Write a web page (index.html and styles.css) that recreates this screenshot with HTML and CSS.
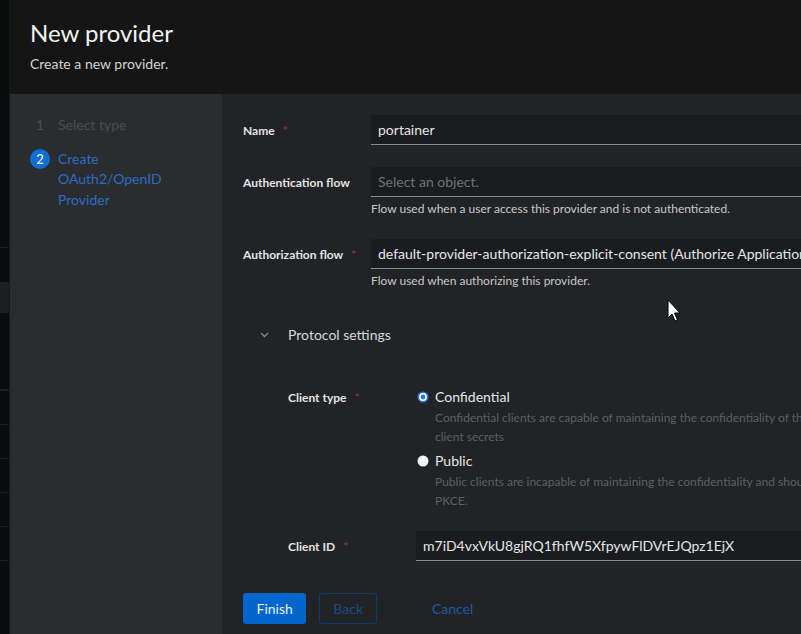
FILE: index.html
```html
<!DOCTYPE html>
<html lang="en">
<head>
<meta charset="utf-8">
<title>New provider</title>
<link rel="stylesheet" href="styles.css">
</head>
<body>
<div class="app">
  <aside class="bg-nav">
    <div class="bg-gap bg-gap-top"></div>
    <div class="bg-row bg-row-a"></div>
    <div class="bg-active"></div>
    <div class="bg-row bg-row-b"></div>
    <div class="bg-row"></div>
    <div class="bg-row"></div>
    <div class="bg-row"></div>
    <div class="bg-row"></div>
    <div class="bg-row"></div>
    <div class="bg-row"></div>
  </aside>
  <div class="modal">
    <header class="modal-header">
      <h1 class="modal-title">New provider</h1>
      <p class="modal-desc">Create a new provider.</p>
    </header>
    <div class="wizard">
      <nav class="steps">
        <ol class="step-list">
          <li class="step step-disabled"><span class="step-num">1</span><span class="step-text">Select type</span></li>
          <li class="step step-current"><span class="step-num"><span class="step-circle">2</span></span><span class="step-text">Create<br>OAuth2/OpenID<br>Provider</span></li>
        </ol>
      </nav>
      <div class="wizard-main">
        <form class="form">
          <div class="form-grid">
            <label class="label">Name <span class="req">*</span></label>
            <div class="control">
              <div class="input">portainer</div>
            </div>

            <label class="label">Authentication flow</label>
            <div class="control">
              <div class="input placeholder">Select an object.</div>
              <div class="helper">Flow used when a user access this provider and is not authenticated.</div>
            </div>

            <label class="label">Authorization flow <span class="req">*</span></label>
            <div class="control">
              <div class="input">default-provider-authorization-explicit-consent (Authorize Application)</div>
              <div class="helper">Flow used when authorizing this provider.</div>
            </div>
          </div>

          <section class="expandable">
            <div class="toggle">
              <svg class="chevron" width="9" height="6" viewBox="0 0 9 6"><path d="M1 1 L4.5 4.5 L8 1" fill="none" stroke="#7f8287" stroke-width="1.4"/></svg>
              <span class="toggle-text">Protocol settings</span>
            </div>
            <div class="form-grid inner-grid">
              <label class="label label-radio">Client type <span class="req">*</span></label>
              <div class="control">
                <div class="radio">
                  <svg class="radio-icon" width="12" height="12" viewBox="0 0 12 12"><circle cx="6" cy="6" r="5.5" fill="#2a79dd"/><circle cx="6" cy="6" r="3.9" fill="#ffffff"/><circle cx="6" cy="6" r="2.4" fill="#2a79dd"/></svg>
                  <span class="radio-label">Confidential</span>
                </div>
                <div class="radio-desc">Confidential clients are capable of maintaining the confidentiality of their credentials such as<br>client secrets</div>
                <div class="radio radio-second">
                  <svg class="radio-icon" width="12" height="12" viewBox="0 0 12 12"><circle cx="6" cy="6" r="5.5" fill="#f4f4f4"/></svg>
                  <span class="radio-label">Public</span>
                </div>
                <div class="radio-desc">Public clients are incapable of maintaining the confidentiality and should use methods like<br>PKCE.</div>
              </div>

              <label class="label">Client ID <span class="req">*</span></label>
              <div class="control">
                <div class="input">m7iD4vxVkU8gjRQ1fhfW5XfpywFlDVrEJQpz1EjX</div>
              </div>
            </div>
          </section>
        </form>
        <footer class="wizard-footer">
          <button class="btn btn-primary" type="button">Finish</button>
          <button class="btn btn-secondary" type="button">Back</button>
          <button class="btn btn-link" type="button">Cancel</button>
        </footer>
      </div>
    </div>
  </div>
</div>
<svg class="cursor" width="14" height="24" viewBox="0 0 14 24"><path d="M1 1 L1 19 L5 15 L8 22 L10.5 21 L7.5 14 L13 14 Z" fill="#ffffff" stroke="#000000" stroke-width="1"/></svg>
</body>
</html>
```
FILE: styles.css
```css
* { box-sizing: border-box; }
html, body { margin: 0; padding: 0; }
body {
  width: 801px;
  height: 634px;
  overflow: hidden;
  background: #0b0d0d;
  font-family: Lato, "Liberation Sans", sans-serif;
  color: #e0e0e0;
  position: relative;
}
.app {
  display: flex;
  height: 634px;
}
.bg-nav {
  width: 10px;
  flex: none;
  display: flex;
  flex-direction: column;
  background: #0a0c0c;
  border-right: 1px solid #17191a;
}
.bg-gap-top { height: 247px; flex: none; }
.bg-row { height: 34px; flex: none; border-top: 1px solid #1b1d1e; }
.bg-row-a { height: 35px; }
.bg-active { height: 31px; flex: none; background: #1c1e1f; }
.bg-row-b { height: 77px; border-top: none; border-bottom: 1px solid #1b1d1e; }

.modal {
  flex: 1;
  display: flex;
  flex-direction: column;
  min-width: 0;
}
.modal-header {
  height: 94px;
  flex: none;
  background: #151515;
  padding: 17px 20px 0;
}
.modal-title {
  margin: 0;
  font-size: 24px;
  line-height: 31px;
  font-weight: 400;
  color: #f2f2f2;
}
.modal-desc {
  margin: 8px 0 0;
  font-size: 14px;
  line-height: 16px;
  color: #d2d2d2;
}
.wizard {
  flex: 1;
  display: flex;
  min-height: 0;
}
.steps {
  width: 212px;
  flex: none;
  background: #2b2c30;
  padding: 21px 20px 0 20px;
}
.step-list {
  list-style: none;
  margin: 0;
  padding: 0;
  display: flex;
  flex-direction: column;
  gap: 13px;
}
.step {
  display: flex;
  font-size: 14px;
  line-height: 20.5px;
}
.step-num {
  width: 20px;
  flex: none;
  display: flex;
  justify-content: center;
  margin-right: 8px;
}
.step-disabled { color: #4a4c50; }
.step-current { color: #2a6cc4; }
.step-circle {
  width: 20px;
  height: 20px;
  border-radius: 50%;
  background: #0f6ed6;
  color: #ffffff;
  font-size: 13px;
  line-height: 20px;
  text-align: center;
}
.wizard-main {
  flex: 1;
  min-width: 0;
  background: #212327;
  display: flex;
  flex-direction: column;
  overflow: hidden;
}
.form {
  flex: 1;
  padding: 21px 0 0 21px;
}
.form-grid {
  display: grid;
  grid-template-columns: 128px 700px;
  row-gap: 22px;
}
.label {
  font-size: 12px;
  font-weight: 700;
  line-height: 16px;
  padding-top: 8px;
  color: #e4e4e4;
  white-space: nowrap;
}
.req {
  color: #a8342b;
  margin-left: 5px;
  font-weight: 400;
}
.input {
  height: 30px;
  background: #1a1c20;
  border-bottom: 1px solid #8a8d90;
  padding: 0 7px;
  font-size: 14px;
  line-height: 29px;
  color: #e6e6e6;
  white-space: nowrap;
  overflow: hidden;
}
.input.placeholder { color: #6e7276; }
.helper {
  margin-top: 4px;
  font-size: 12px;
  line-height: 16px;
  color: #c9c9c9;
}
.expandable {
  margin-top: 36px;
}
.toggle {
  display: flex;
  align-items: center;
  height: 20px;
}
.chevron {
  margin-left: 17px;
  margin-right: 19px;
}
.toggle-text {
  font-size: 14px;
  line-height: 20px;
  color: #d8d8d8;
}
.inner-grid {
  margin-top: 43px;
  margin-left: 45px;
  row-gap: 21px;
}
.label-radio { padding-top: 2px; }
.radio {
  display: flex;
  align-items: center;
  height: 18px;
}
.radio-second { margin-top: 6px; }
.radio-icon {
  margin-left: 1px;
  margin-right: 6px;
  flex: none;
}
.radio-label {
  font-size: 14px;
  line-height: 18px;
  color: #e6e6e6;
}
.radio-desc {
  padding-left: 19px;
  margin-top: 2px;
  font-size: 12px;
  line-height: 19px;
  color: #5c6064;
  white-space: nowrap;
}
.wizard-footer {
  flex: none;
  height: 66px;
  display: flex;
  align-items: flex-start;
  padding: 25px 0 0 21px;
}
.btn {
  font-family: inherit;
  font-size: 14px;
  height: 31px;
  line-height: 20px;
  border-radius: 3px;
  padding: 5px 12.5px;
  border: 1px solid transparent;
  background: none;
}
.btn-primary {
  background: #0066cc;
  color: #e9eef5;
  margin-right: 13px;
}
.btn-secondary {
  border-color: #0e3a69;
  color: #1b4b80;
  padding: 5px 13px;
  margin-right: 38px;
}
.btn-link {
  color: #1d5aa0;
  padding: 5px 16px;
}
.cursor {
  position: absolute;
  left: 667px;
  top: 299px;
}
```
